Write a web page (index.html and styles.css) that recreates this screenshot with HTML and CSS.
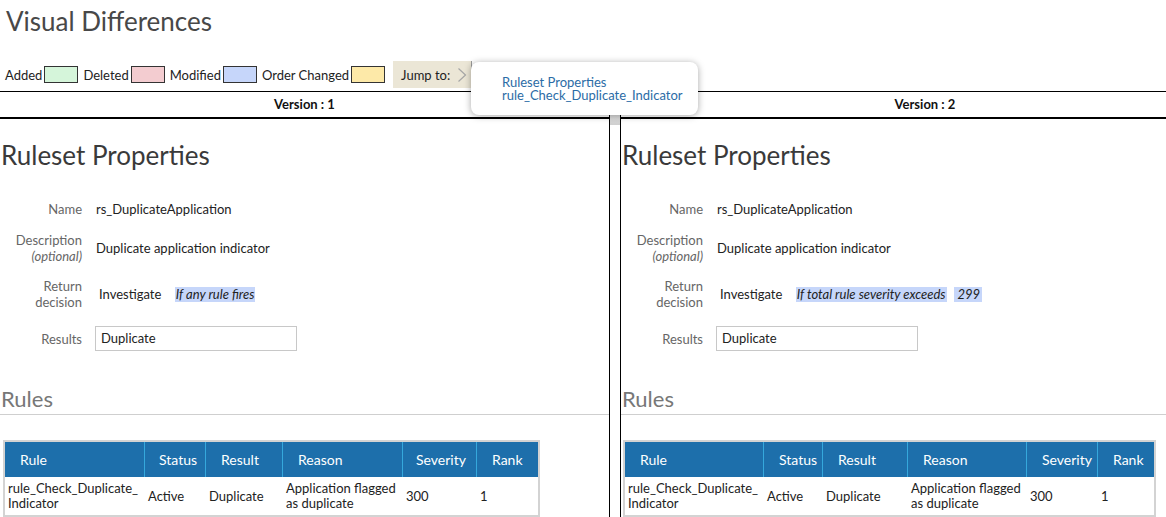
FILE: index.html
```html
<!DOCTYPE html>
<html lang="en">
<head>
<meta charset="utf-8">
<title>Visual Differences</title>
<link rel="stylesheet" href="styles.css">
</head>
<body>
<h1 class="title">Visual Differences</h1>

<div class="toolbar">
  <div class="legend">
    <span class="legend-text">Added</span><span class="swatch swatch-added"></span>
    <span class="legend-text">Deleted</span><span class="swatch swatch-deleted"></span>
    <span class="legend-text">Modified</span><span class="swatch swatch-modified"></span>
    <span class="legend-text">Order Changed</span><span class="swatch swatch-order"></span>
  </div>
  <div class="jump">
    <span class="jump-label">Jump to:</span>
    <svg class="jump-chevron" width="10" height="16" viewBox="0 0 10 16"><polyline points="1.5,1.5 8.5,8 1.5,14.5" fill="none" stroke="#a6a6a6" stroke-width="1.2"/></svg>
  </div>
</div>

<div class="jump-menu">
  <a class="jump-link" href="#">Ruleset Properties</a>
  <a class="jump-link" href="#">rule_Check_Duplicate_Indicator</a>
</div>

<div class="compare">
  <section class="pane pane-left">
    <div class="version">Version : 1</div>
    <h2 class="section-title">Ruleset Properties</h2>
    <div class="props">
      <div class="prop prop-name">
        <div class="prop-label">Name</div>
        <div class="prop-value">rs_DuplicateApplication</div>
      </div>
      <div class="prop prop-desc">
        <div class="prop-label">Description<br><em>(optional)</em></div>
        <div class="prop-value">Duplicate application indicator</div>
      </div>
      <div class="prop prop-return">
        <div class="prop-label">Return<br>decision</div>
        <div class="prop-value prop-decision">Investigate <span class="mod">If any rule fires</span></div>
      </div>
      <div class="prop prop-results">
        <div class="prop-label">Results</div>
        <div class="prop-input">Duplicate</div>
      </div>
    </div>
    <h3 class="rules-title">Rules</h3>
    <table class="rules rules-v1">
      <colgroup>
        <col class="c-rule"><col class="c-status"><col class="c-result"><col class="c-reason"><col class="c-sev"><col class="c-rank">
      </colgroup>
      <thead>
        <tr><th>Rule</th><th>Status</th><th>Result</th><th>Reason</th><th>Severity</th><th>Rank</th></tr>
      </thead>
      <tbody>
        <tr><td>rule_Check_Duplicate_<wbr>Indicator</td><td>Active</td><td>Duplicate</td><td>Application flagged as duplicate</td><td>300</td><td>1</td></tr>
      </tbody>
    </table>
  </section>

  <div class="gutter"><div class="grip"></div></div>

  <section class="pane pane-right">
    <div class="version">Version : 2</div>
    <h2 class="section-title">Ruleset Properties</h2>
    <div class="props">
      <div class="prop prop-name">
        <div class="prop-label">Name</div>
        <div class="prop-value">rs_DuplicateApplication</div>
      </div>
      <div class="prop prop-desc">
        <div class="prop-label">Description<br><em>(optional)</em></div>
        <div class="prop-value">Duplicate application indicator</div>
      </div>
      <div class="prop prop-return">
        <div class="prop-label">Return<br>decision</div>
        <div class="prop-value prop-decision">Investigate <span class="mod">If total rule severity exceeds</span> <span class="mod mod-num">299</span></div>
      </div>
      <div class="prop prop-results">
        <div class="prop-label">Results</div>
        <div class="prop-input">Duplicate</div>
      </div>
    </div>
    <h3 class="rules-title">Rules</h3>
    <table class="rules rules-v2">
      <colgroup>
        <col class="c-rule"><col class="c-status"><col class="c-result"><col class="c-reason"><col class="c-sev"><col class="c-rank">
      </colgroup>
      <thead>
        <tr><th>Rule</th><th>Status</th><th>Result</th><th>Reason</th><th>Severity</th><th>Rank</th></tr>
      </thead>
      <tbody>
        <tr><td>rule_Check_Duplicate_<wbr>Indicator</td><td>Active</td><td>Duplicate</td><td>Application flagged as duplicate</td><td>300</td><td>1</td></tr>
      </tbody>
    </table>
  </section>
</div>
</body>
</html>
```

FILE: styles.css
```css
* { box-sizing: border-box; }

html, body {
  margin: 0;
  padding: 0;
  overflow: hidden;
  background: #fff;
}

body {
  font-family: Lato, "Open Sans", "Liberation Sans", sans-serif;
  font-size: 13px;
  color: #222;
  width: 1166px;
  height: 517px;
  position: relative;
}

.title {
  margin: 0;
  padding: 6px 0 0 6px;
  font-size: 26px;
  line-height: 30px;
  font-weight: normal;
  color: #484848;
}

.toolbar {
  display: flex;
  align-items: center;
  height: 27px;
  margin-top: 25px;
}

.legend {
  display: flex;
  align-items: center;
  padding-left: 5px;
}

.legend-text {
  line-height: 16px;
}

.swatch {
  display: inline-block;
  width: 34px;
  height: 17px;
  border: 1px solid #333;
  margin: 0 5px 0 2px;
}
.swatch-added { background: #d5f5da; }
.swatch-deleted { background: #f3ccd0; }
.swatch-modified { background: #c6d6fa; }
.swatch-order { background: #fde9a8; }

.jump {
  display: flex;
  align-items: center;
  height: 27px;
  margin-left: 3px;
  padding: 0 4px 0 8px;
  background: #ebe6d6;
  border-right: 1px solid #9a9a9a;
}

.jump-chevron {
  margin-left: 7px;
}

.jump-menu {
  position: absolute;
  left: 471px;
  top: 62px;
  width: 227px;
  height: 53px;
  padding: 14px 0 0 31px;
  background: #fff;
  border-radius: 8px;
  box-shadow: 0 1px 7px rgba(0, 0, 0, 0.35);
  z-index: 5;
}

.jump-link {
  display: block;
  line-height: 13px;
  color: #2b6ca6;
  text-decoration: none;
}

.compare {
  display: flex;
  width: 1230px;
  margin-top: 3px;
  border-top: 1px solid #000;
  height: 430px;
}

.pane {
  flex: none;
}
.pane-left { width: 609px; }
.pane-right { width: 608px; }

.gutter {
  flex: none;
  width: 12px;
  border-left: 1px solid #000;
  border-right: 1px solid #000;
}
.grip {
  margin-top: 21px;
  height: 12px;
  background: linear-gradient(#e4e4e4, #cfcfcf);
}

.version {
  height: 27px;
  line-height: 25px;
  text-align: center;
  font-weight: bold;
  border-bottom: 2px solid #000;
  color: #111;
}

.section-title {
  margin: 21px 0 0 1px;
  font-size: 26px;
  line-height: 31px;
  font-weight: normal;
  color: #3a3a3a;
}

.props {
  display: flex;
  flex-direction: column;
}

.prop {
  display: flex;
  align-items: center;
}
.prop-name { height: 22px; margin-top: 27px; }
.prop-desc { height: 32px; margin-top: 12px; }
.prop-return { height: 32px; margin-top: 14px; }
.prop-results { height: 25px; margin-top: 16px; }

.prop-label {
  width: 82px;
  text-align: right;
  color: #666;
  line-height: 16px;
}
.prop-label em { font-style: italic; }

.prop-value {
  margin-left: 14px;
}
.prop-decision {
  padding-left: 3px;
  display: flex;
  align-items: center;
  white-space: pre;
}

.mod {
  background: #c6d6fa;
  font-style: italic;
  line-height: 15px;
  padding: 0 1px;
  margin-left: 10px;
}
.mod-num {
  margin-left: 7px;
  padding: 0 2px 0 4px;
}

.prop-input {
  margin-left: 13px;
  width: 202px;
  height: 25px;
  line-height: 23px;
  padding-left: 5px;
  border: 1px solid #c8c8c8;
}

.rules-title {
  margin: 35px 0 0 0;
  padding: 0 0 2px 1px;
  font-size: 22px;
  line-height: 26px;
  font-weight: normal;
  color: #777;
  border-bottom: 1px solid #cfcfcf;
}

.rules {
  margin: 25px 0 0 3px;
  border-collapse: separate;
  border-spacing: 0;
  border: 2px solid #d3d3d3;
  table-layout: fixed;
}
.rules-v1 { width: 537px; }
.rules-v2 { width: 533px; margin-left: 2px; }

.rules-v1 .c-rule { width: 139px; }
.rules-v1 .c-status { width: 61px; }
.rules-v1 .c-result { width: 77px; }
.rules-v1 .c-reason { width: 120px; }
.rules-v1 .c-sev { width: 74px; }
.rules-v1 .c-rank { width: 62px; }

.rules-v2 .c-rule { width: 138px; }
.rules-v2 .c-status { width: 59px; }
.rules-v2 .c-result { width: 85px; }
.rules-v2 .c-reason { width: 119px; }
.rules-v2 .c-sev { width: 71px; }
.rules-v2 .c-rank { width: 57px; }

.rules th {
  height: 35px;
  padding: 0 0 0 15px;
  background: #1d6fab;
  color: #fff;
  font-size: 14px;
  font-weight: normal;
  text-align: left;
  border-left: 1px solid #35a8dc;
  white-space: nowrap;
}
.rules th:first-child { border-left: none; }
.rules-v1 th:nth-child(2) { padding-left: 14px; }
.rules-v1 th:nth-child(5) { padding-left: 13px; }

.rules td {
  padding: 4px 2px 4px 3px;
  line-height: 15px;
  vertical-align: middle;
  color: #222;
}
.rules td + td { padding-left: 4px; }
```
